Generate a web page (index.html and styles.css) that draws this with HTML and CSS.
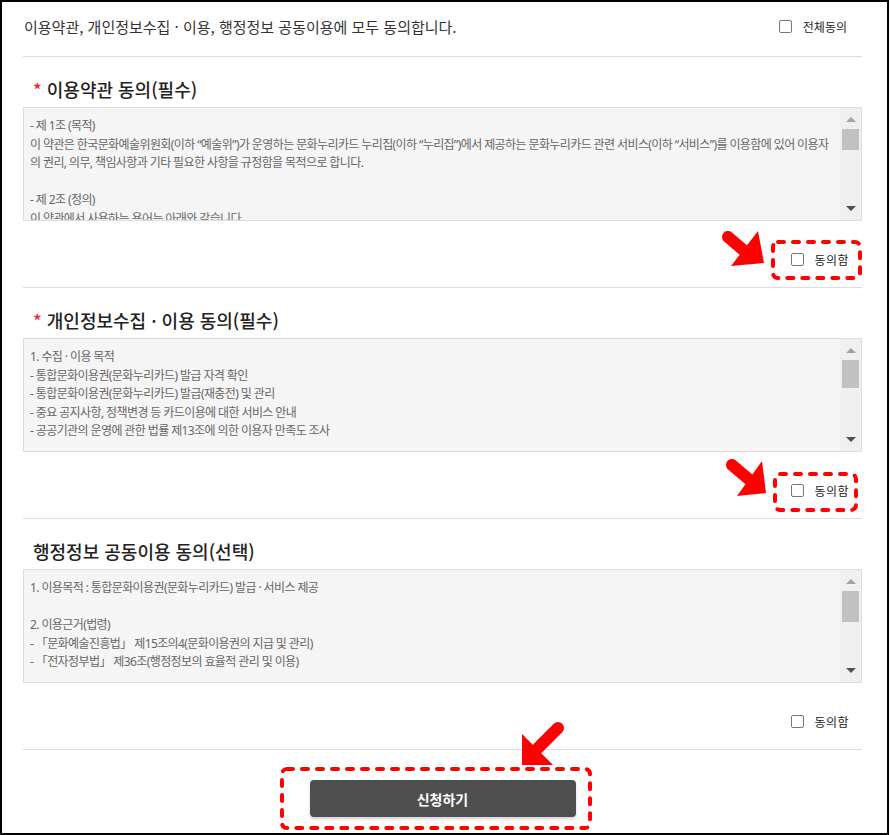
FILE: index.html
```html
<!DOCTYPE html>
<html lang="ko">
<head>
  <meta charset="UTF-8">
  <meta name="viewport" content="width=device-width, initial-scale=1.0">
  <title>약관 동의</title>
  <link rel="stylesheet" href="styles.css">
</head>
<body>

<div class="page">
  <div class="all-agree">
    <p class="all-text">이용약관, 개인정보수집 · 이용, 행정정보 공동이용에 모두 동의합니다.</p>
    <label class="check check-all"><span class="box"></span>전체동의</label>
  </div>

  <section class="terms">
    <h3 class="terms-title"><em>*</em> 이용약관 동의(필수)</h3>
    <div class="scroll-box">
      <div class="scroll-text">
        - 제 1조 (목적)<br>
        이 약관은 한국문화예술위원회(이하 “예술위”)가 운영하는 문화누리카드 누리집(이하 “누리집”)에서 제공하는 문화누리카드 관련 서비스(이하 “서비스”)를 이용함에 있어 이용자<br>
        의 권리, 의무, 책임사항과 기타 필요한 사항을 규정함을 목적으로 합니다.<br>
        <br>
        - 제 2조 (정의)<br>
        이 약관에서 사용하는 용어는 아래와 같습니다.<br>
        1. “누리집”이란 예술위가 운영하는 문화누리카드 누리집을 말합니다.
      </div>
      <div class="scrollbar">
        <span class="arrow-up"></span>
        <span class="thumb thumb-1"></span>
        <span class="arrow-down"></span>
      </div>
    </div>
    <div class="agree-row">
      <label class="check"><span class="box"></span>동의함</label>
    </div>
  </section>

  <section class="terms">
    <h3 class="terms-title"><em>*</em> 개인정보수집 · 이용 동의(필수)</h3>
    <div class="scroll-box">
      <div class="scroll-text">
        1. 수집 · 이용 목적<br>
        - 통합문화이용권(문화누리카드) 발급 자격 확인<br>
        - 통합문화이용권(문화누리카드) 발급(재충전) 및 관리<br>
        - 중요 공지사항, 정책변경 등 카드이용에 대한 서비스 안내<br>
        - 공공기관의 운영에 관한 법률 제13조에 의한 이용자 만족도 조사<br>
        <br>
        2. 수집 · 이용 항목
      </div>
      <div class="scrollbar">
        <span class="arrow-up"></span>
        <span class="thumb thumb-2"></span>
        <span class="arrow-down"></span>
      </div>
    </div>
    <div class="agree-row">
      <label class="check"><span class="box"></span>동의함</label>
    </div>
  </section>

  <section class="terms">
    <h3 class="terms-title">행정정보 공동이용 동의(선택)</h3>
    <div class="scroll-box">
      <div class="scroll-text">
        1. 이용목적 : 통합문화이용권(문화누리카드) 발급 · 서비스 제공<br>
        <br>
        2. 이용근거(법령)<br>
        - 「문화예술진흥법」 제15조의4(문화이용권의 지급 및 관리)<br>
        - 「전자정부법」 제36조(행정정보의 효율적 관리 및 이용)<br>
        <br>
        3. 이용항목
      </div>
      <div class="scrollbar">
        <span class="arrow-up"></span>
        <span class="thumb thumb-3"></span>
        <span class="arrow-down"></span>
      </div>
    </div>
    <div class="agree-row">
      <label class="check"><span class="box"></span>동의함</label>
    </div>
  </section>

  <div class="submit-area">
    <button class="submit">신청하기</button>
  </div>

  <!-- red guide marks drawn over the form -->
  <svg class="marks" width="890" height="835" viewBox="0 0 890 835">
    <g fill="none" stroke="#ff0000" stroke-width="4" stroke-linecap="round" stroke-dasharray="6 9">
      <rect x="773" y="242" width="87" height="36" rx="5"/>
      <rect x="775" y="474" width="81" height="36" rx="5"/>
      <rect x="282" y="769" width="308" height="59" rx="5"/>
    </g>
    <g stroke="#ff0000" stroke-width="12" stroke-linecap="round">
      <line x1="728" y1="237" x2="748" y2="254"/>
      <line x1="732" y1="465" x2="752" y2="482"/>
      <line x1="558" y1="728" x2="538" y2="748"/>
    </g>
    <g fill="#ff0000">
      <polygon points="758,231 764,263 731,266"/>
      <polygon points="762,461 766,493 737,496"/>
      <polygon points="522,734 522,765 553,765"/>
    </g>
  </svg>
</div>

</body>
</html>
```

FILE: styles.css
```css
body {
  margin: 0;
  font-family: "Noto Sans CJK KR", "Noto Sans", sans-serif;
  color: #333;
  background: #fff;
}
.page {
  position: relative;
  width: 889px;
  height: 835px;
  box-sizing: border-box;
  border: 2px solid #000;
  padding: 0 25px 0 21px;
}
.all-agree {
  display: flex;
  align-items: center;
  justify-content: space-between;
  padding: 10px 15px 16px 1px;
  height: 28px;
}
.all-text {
  margin: 0;
  font-size: 15px;
  color: #333;
}
.check {
  display: flex;
  align-items: center;
  font-size: 12px;
  letter-spacing: 0.5px;
  color: #222;
}
.check .box {
  width: 11px;
  height: 11px;
  border: 1px solid #777;
  border-radius: 2px;
  background: #fff;
  margin-right: 10px;
}
.check-all {
  letter-spacing: 0;
}
.check-all .box {
  margin-right: 11px;
}
.terms {
  border-top: 1px solid #ddd;
  padding-top: 20px;
}
.terms-title {
  margin: 0 0 6px;
  padding-left: 10px;
  height: 24px;
  line-height: 24px;
  font-size: 18px;
  font-weight: 500;
  color: #222;
}
.terms-title em {
  font-style: normal;
  color: #e8262b;
}
.scroll-box {
  display: flex;
  height: 114px;
  box-sizing: border-box;
  border: 1px solid #ddd;
  background: #f5f5f5;
}
.scroll-text {
  flex: 1;
  overflow: hidden;
  padding: 9px 6px 0 6px;
  font-family: "Noto Sans", "Noto Sans CJK KR", sans-serif;
  font-size: 12px;
  line-height: 18.5px;
  letter-spacing: -0.6px;
  color: #666;
  white-space: nowrap;
}
.scrollbar {
  width: 21px;
  background: #f0f0f0;
  display: flex;
  flex-direction: column;
  align-items: center;
}
.arrow-up {
  margin-top: 9px;
  width: 0;
  height: 0;
  border-left: 5px solid transparent;
  border-right: 5px solid transparent;
  border-bottom: 5px solid #a3a3a3;
}
.thumb {
  margin-top: 7px;
  width: 17px;
  background: #c1c1c1;
}
.thumb-1 {
  height: 21px;
}
.thumb-2 {
  height: 28px;
}
.thumb-3 {
  height: 31px;
}
.arrow-down {
  margin-top: auto;
  margin-bottom: 9px;
  width: 0;
  height: 0;
  border-left: 5px solid transparent;
  border-right: 5px solid transparent;
  border-top: 5px solid #505050;
}
.agree-row {
  display: flex;
  justify-content: flex-end;
  height: 66px;
  box-sizing: border-box;
  padding: 31px 13px 0 0;
}
.agree-row .check {
  height: 14px;
}
.submit-area {
  border-top: 1px solid #ddd;
  display: flex;
  justify-content: center;
  padding-top: 30px;
}
.submit {
  width: 266px;
  height: 37px;
  border: none;
  border-radius: 4px;
  background: #4f4f4f;
  color: #fff;
  font-family: inherit;
  font-size: 14px;
  font-weight: bold;
  box-shadow: 0 2px 3px rgba(0, 0, 0, 0.18);
}
.marks {
  position: absolute;
  left: -2px;
  top: -2px;
  pointer-events: none;
}
```
